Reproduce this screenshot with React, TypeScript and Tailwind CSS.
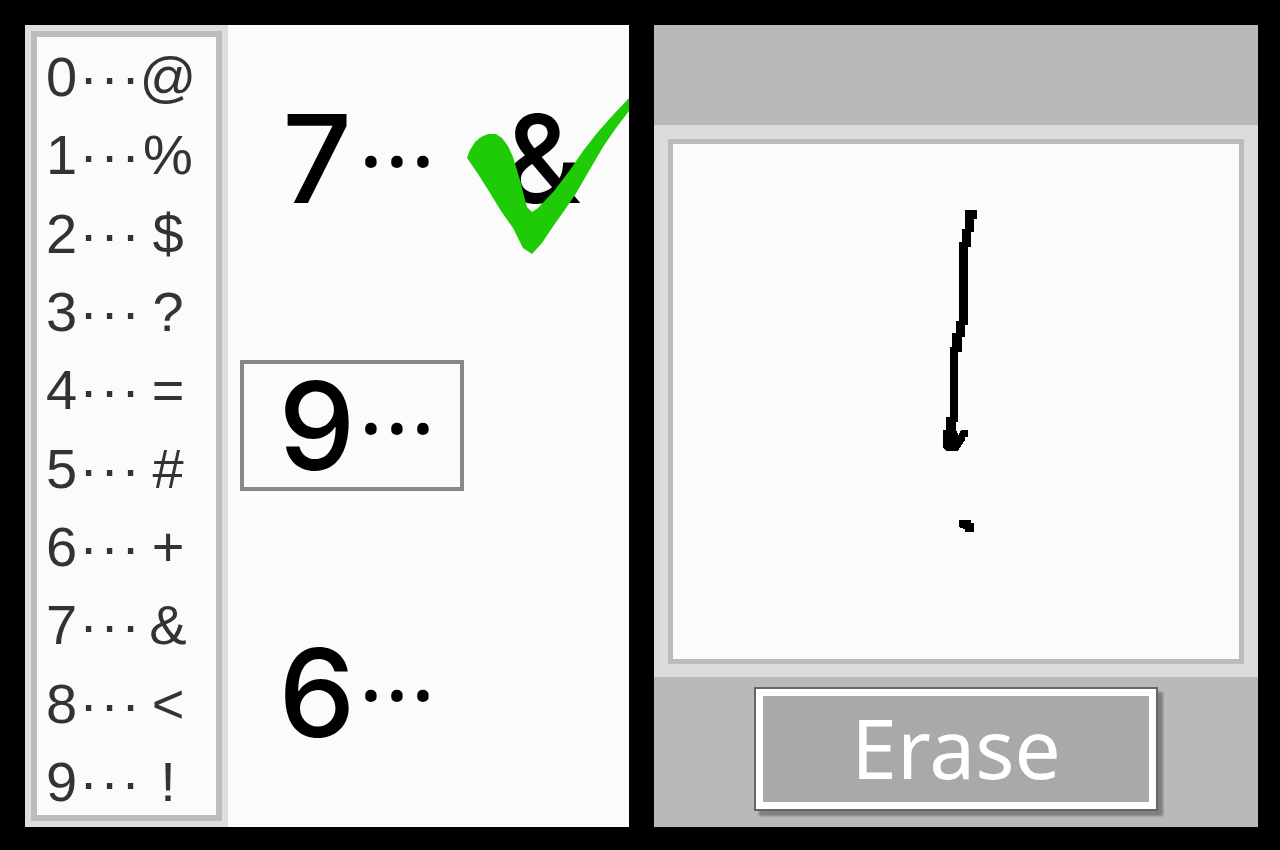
const legend = [
  { digit: "0", symbol: "@" },
  { digit: "1", symbol: "%" },
  { digit: "2", symbol: "$" },
  { digit: "3", symbol: "?" },
  { digit: "4", symbol: "=" },
  { digit: "5", symbol: "#" },
  { digit: "6", symbol: "+" },
  { digit: "7", symbol: "&" },
  { digit: "8", symbol: "<" },
  { digit: "9", symbol: "!" },
];

interface Question {
  digit: string;
  answer?: string;
  active?: boolean;
}

const questions: Question[] = [
  { digit: "7", answer: "&" },
  { digit: "9", active: true },
  { digit: "6" },
];

function Legend() {
  return (
    <aside className="flex w-[203px] shrink-0 bg-[#dedede] p-[6px]">
      <ul className="flex flex-1 flex-col justify-between border-[6px] border-[#bcbcbc] bg-[#fbfbfb] pt-[7px] text-[56px] leading-[66px] text-[#333]">
        {legend.map((row) => (
          <li key={row.digit} className="flex pl-[9px]">
            <span className="w-[32px]">{row.digit}</span>
            <span className="flex w-[66px]">
              <span className="w-[21px] text-center">·</span>
              <span className="w-[21px] text-center">·</span>
              <span className="w-[21px] text-center">·</span>
            </span>
            <span className="flex w-[48px] justify-center">{row.symbol}</span>
          </li>
        ))}
      </ul>
    </aside>
  );
}

function CheckMark() {
  return (
    <svg
      className="absolute right-0 top-[72px] h-[158px] w-[164px]"
      viewBox="0 0 164 158"
      fill="#1fcb06"
    >
      <path d="M2 61 L5 53 L10 45 L16 40 L23 37 L31 37 L37 41 L43 49 L48 60 L55 83 L59 99 L62 110 L67 115 L73 111 L89 94 L105 73 L118 54 L132 36 L148 18 L164 1 L164 14 L151 31 L138 50 L124 74 L110 98 L99 114 L87 131 L77 146 L67 157 L58 151 L48 131 L36 114 L25 96 L13 77 Z" />
    </svg>
  );
}

function QuestionRow({ digit, answer, active }: Question) {
  return (
    <div className="relative flex flex-1 items-center pl-[12px] font-['Inter',sans-serif] text-[122px] font-medium leading-none text-black">
      <div
        className={`flex h-[131px] w-[224px] items-center border-4 pl-[32px] ${
          active ? "border-[#888]" : "border-transparent"
        }`}
      >
        <span className="flex w-[82px] justify-center">{digit}</span>
        <span className="flex font-['Noto_Sans',sans-serif] text-[84px] leading-none">
          <span className="flex w-[26px] justify-center">·</span>
          <span className="flex w-[26px] justify-center">·</span>
          <span className="flex w-[26px] justify-center">·</span>
        </span>
      </div>
      {answer && <span className="ml-[38px]">{answer}</span>}
      {answer && <CheckMark />}
    </div>
  );
}

function Drawing() {
  return (
    <svg className="h-[515px] w-full" viewBox="0 0 1701 1545" shapeRendering="crispEdges">
      <g transform="translate(741 138)">
        <path d="M137 60 H173 V85 H165 V125 H155 V170 H146 V405 H137 V440 H128 V485 H117 V695 H110 V722 L117 735 L125 720 H147 V740 H137 V750 L125 768 L115 783 H80 L70 772 V720 H80 V680 H90 V470 H98 V430 H108 V392 H119 V155 H128 V115 H137 Z" />
        <path d="M118 990 H155 V1000 H165 V1028 H138 V1018 L118 1012 Z" />
      </g>
    </svg>
  );
}

export default function App() {
  return (
    <main className="flex min-h-screen gap-[25px] bg-black pb-[23px] pl-[25px] pr-[22px] pt-[25px] font-['Liberation_Sans',sans-serif]">
      <section className="flex flex-1 bg-[#fbfbfb]">
        <Legend />
        <div className="flex flex-1 flex-col">
          {questions.map((question) => (
            <QuestionRow key={question.digit} {...question} />
          ))}
        </div>
      </section>

      <section className="flex flex-1 flex-col bg-[#b9b9b9]">
        <header className="h-[100px]" />
        <div className="flex flex-1 bg-[#dcdcdc] p-[14px] pb-[13px]">
          <div className="flex flex-1 items-center justify-center border-[5px] border-[#bbb] bg-[#fbfbfb]">
            <Drawing />
          </div>
        </div>
        <footer className="flex h-[150px] justify-center pt-[10px]">
          <button
            type="button"
            className="h-[124px] w-[404px] border-2 border-[#666] bg-white p-[7px] shadow-[5px_5px_2px_#808080]"
          >
            <span className="flex h-full items-center justify-center bg-[#a9a9a9] pb-[4px] font-['Noto_Sans',sans-serif] text-[82px] leading-none text-white">
              Erase
            </span>
          </button>
        </footer>
      </section>
    </main>
  );
}
